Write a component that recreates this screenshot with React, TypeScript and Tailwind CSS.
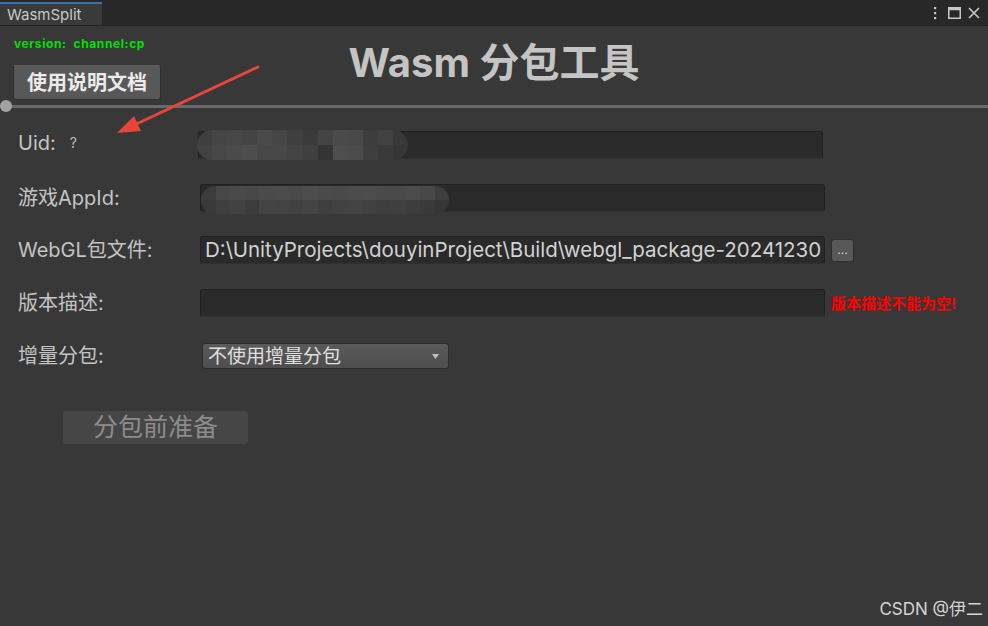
import React from "react";

const uidCells = [
  "bg-[#3f3f3f]", "bg-[#454545]", "bg-[#474747]", "bg-[#444444]", "bg-[#4a4a4a]", "bg-[#464646]",
  "bg-[#404040]", "bg-[#3b3b3b]", "bg-[#444444]", "bg-[#4b4b4b]", "bg-[#494949]", "bg-[#3d3d3d]",
  "bg-[#424242]", "bg-[#393939]",
];
const uidCells2 = [
  "bg-[#424242]", "bg-[#474747]", "bg-[#4a4a4a]", "bg-[#4d4d4d]", "bg-[#474747]", "bg-[#484848]",
  "bg-[#444444]", "bg-[#404040]", "bg-[#343434]", "bg-[#4e4e4e]", "bg-[#4c4c4c]", "bg-[#3f3f3f]",
  "bg-[#3a3a3a]", "bg-[#363636]",
];
const appCells = [
  "bg-[#3c3c3c]", "bg-[#474747]", "bg-[#4a4a4a]", "bg-[#484848]", "bg-[#4b4b4b]", "bg-[#4c4c4c]",
  "bg-[#4a4a4a]", "bg-[#4d4d4d]", "bg-[#4b4b4b]", "bg-[#4a4a4a]", "bg-[#4c4c4c]", "bg-[#4d4d4d]",
  "bg-[#4b4b4b]", "bg-[#4a4a4a]", "bg-[#4c4c4c]", "bg-[#484848]", "bg-[#3e3e3e]",
];
const appCells2 = [
  "bg-[#3a3a3a]", "bg-[#3f3f3f]", "bg-[#424242]", "bg-[#3c3c3c]", "bg-[#444444]", "bg-[#434343]",
  "bg-[#414141]", "bg-[#444444]", "bg-[#3f3f3f]", "bg-[#424242]", "bg-[#434343]", "bg-[#414141]",
  "bg-[#3e3e3e]", "bg-[#404040]", "bg-[#3d3d3d]", "bg-[#3a3a3a]", "bg-[#363636]",
];

function Label({ children }: { children: React.ReactNode }) {
  return (
    <div className="w-[200px] shrink-0 pl-[18px] text-[20px] leading-none text-[#c4c4c4] flex items-center">
      {children}
    </div>
  );
}

function Input({ children, extra }: { children?: React.ReactNode; extra?: string }) {
  return (
    <div
      className={
        "relative h-[28px] w-[625px] rounded-[3px] bg-[#2a2a2a] border border-[#202020] border-b-[#303030] flex items-center " +
        (extra ?? "")
      }
    >
      {children}
    </div>
  );
}

export default function App() {
  return (
    <div
      className="w-[988px] h-[626px] bg-[#383838] overflow-hidden flex flex-col relative"
      style={{ fontFamily: '"Inter", "Noto Sans CJK SC", sans-serif' }}
    >
      {/* title bar */}
      <div className="h-[26px] shrink-0 bg-[#282828] border-b border-[#232323] flex items-end justify-between">
        <div className="h-[23px] w-[102px] bg-[#3a3a3a] border-t-[2px] border-[#3b72ad] pl-[7px] flex items-center text-[15px] text-[#c8c8c8] leading-none">
          WasmSplit
        </div>
        <div className="h-full flex items-center pr-[8px] text-[#c8c8c8]">
          <svg width="6" height="14" viewBox="0 0 6 14">
            <rect x="2" y="1" width="2.2" height="2.2" fill="#c8c8c8" />
            <rect x="2" y="6" width="2.2" height="2.2" fill="#c8c8c8" />
            <rect x="2" y="11" width="2.2" height="2.2" fill="#c8c8c8" />
          </svg>
          <svg className="ml-[10px]" width="13" height="12" viewBox="0 0 13 12">
            <rect x="0.75" y="0.75" width="11.5" height="10.5" fill="none" stroke="#c8c8c8" strokeWidth="1.5" />
            <rect x="0.75" y="0.75" width="11.5" height="2.5" fill="#c8c8c8" />
          </svg>
          <svg className="ml-[7px]" width="12" height="12" viewBox="0 0 12 12">
            <path d="M1 1 L11 11 M11 1 L1 11" stroke="#c8c8c8" strokeWidth="1.6" />
          </svg>
        </div>
      </div>

      {/* header area */}
      <div className="grid h-[74px] shrink-0">
        <div className="col-start-1 row-start-1 flex flex-col items-start">
          <div className="mt-[11px] ml-[14px] text-[12px] leading-[14px] font-bold text-[#00e000] tracking-[0.6px]">
            version:&nbsp; channel:cp
          </div>
          <div className="mt-[14px] ml-[13px] h-[35px] w-[148px] rounded-[3px] bg-[#585858] border border-[#2e2e2e] border-t-[#5e5e5e] flex items-center justify-center text-[20px] font-bold text-[#ececec] leading-none">
            使用说明文档
          </div>
        </div>
        <div className="col-start-1 row-start-1 justify-self-center mt-[17px] text-[40px] font-bold leading-none text-[#c4c4c4]">
          Wasm 分包工具
        </div>
      </div>

      {/* slider line */}
      <div className="relative h-[12px] shrink-0 flex items-center">
        <div className="h-[3px] w-full bg-[#6a6a6a]" />
        <div className="absolute left-0 top-0 w-[12px] h-[12px] rounded-full bg-[#a2a2a2]" />
      </div>

      {/* form rows */}
      <div className="flex flex-col">
        <div className="mt-[19px] h-[28px] flex items-center">
          <Label>
            <span className="-mt-[4px]">Uid:</span>
            <span className="ml-[14px] -mt-[4px] text-[14px] text-[#bdbdbd]">?</span>
          </Label>
          <Input extra="-ml-[2px]">
            <div className="absolute -left-[2px] -top-[2px] h-[30px] w-[211px] rounded-full overflow-hidden flex flex-col">
              <div className="flex h-[15px]">
                {uidCells.map((c, i) => (
                  <div key={i} className={"flex-1 " + c} />
                ))}
              </div>
              <div className="flex h-[15px]">
                {uidCells2.map((c, i) => (
                  <div key={i} className={"flex-1 " + c} />
                ))}
              </div>
            </div>
          </Input>
        </div>

        <div className="mt-[25px] h-[28px] flex items-center">
          <Label>
            <span>游戏AppId:</span>
          </Label>
          <Input>
            <div className="absolute left-0 top-[1px] h-[28px] w-[248px] rounded-full overflow-hidden flex flex-col">
              <div className="flex h-[14px]">
                {appCells.map((c, i) => (
                  <div key={i} className={"flex-1 " + c} />
                ))}
              </div>
              <div className="flex h-[14px]">
                {appCells2.map((c, i) => (
                  <div key={i} className={"flex-1 " + c} />
                ))}
              </div>
            </div>
          </Input>
        </div>

        <div className="mt-[24px] h-[28px] flex items-center">
          <Label>
            <span>WebGL包文件:</span>
          </Label>
          <Input>
            <span className="pl-[4px] text-[20.5px] leading-none text-[#d2d2d2] whitespace-nowrap">
              D:\UnityProjects\douyinProject\Build\webgl_package-20241230
            </span>
          </Input>
          <div className="ml-[6px] h-[23px] w-[23px] rounded-[3px] bg-[#585858] border border-[#2e2e2e] flex items-end justify-center pb-[5px] text-[12px] leading-none text-[#dcdcdc]">
            ...
          </div>
        </div>

        <div className="mt-[25px] h-[28px] flex items-center">
          <Label>
            <span>版本描述:</span>
          </Label>
          <Input />
          <span className="ml-[6px] text-[15px] font-bold leading-none text-[#ff0000] whitespace-nowrap">
            版本描述不能为空!
          </span>
        </div>

        <div className="mt-[25px] h-[28px] flex items-center">
          <Label>
            <span>增量分包:</span>
          </Label>
          <div className="ml-[2px] h-[26px] w-[247px] rounded-[3px] bg-gradient-to-b from-[#5a5a5a] to-[#4e4e4e] border border-[#2c2c2c] flex items-center justify-between pl-[5px] pr-[9px]">
            <span className="text-[19px] leading-none text-[#e0e0e0]">不使用增量分包</span>
            <svg width="7" height="5" viewBox="0 0 7 5">
              <path d="M0 0 L7 0 L3.5 5 Z" fill="#bdbdbd" />
            </svg>
          </div>
        </div>

        <div className="mt-[41px] ml-[63px] h-[33px] w-[185px] rounded-[3px] bg-[#464646] flex items-center justify-center text-[25px] leading-none text-[#8c8c8c]">
          分包前准备
        </div>
      </div>

      <div className="flex-1" />
      <div className="flex justify-end pr-[5px] pb-[8px] text-[17px] leading-none text-[#d4d4d4]">
        CSDN @伊二
      </div>

      {/* red annotation arrow overlay */}
      <svg className="absolute left-0 top-0 pointer-events-none" width="988" height="626">
        <line x1="258" y1="67" x2="130" y2="127" stroke="#e8453c" strokeWidth="3" strokeLinecap="round" />
        <polygon points="117,133 134,116 141,131" fill="#e8453c" />
      </svg>
    </div>
  );
}
